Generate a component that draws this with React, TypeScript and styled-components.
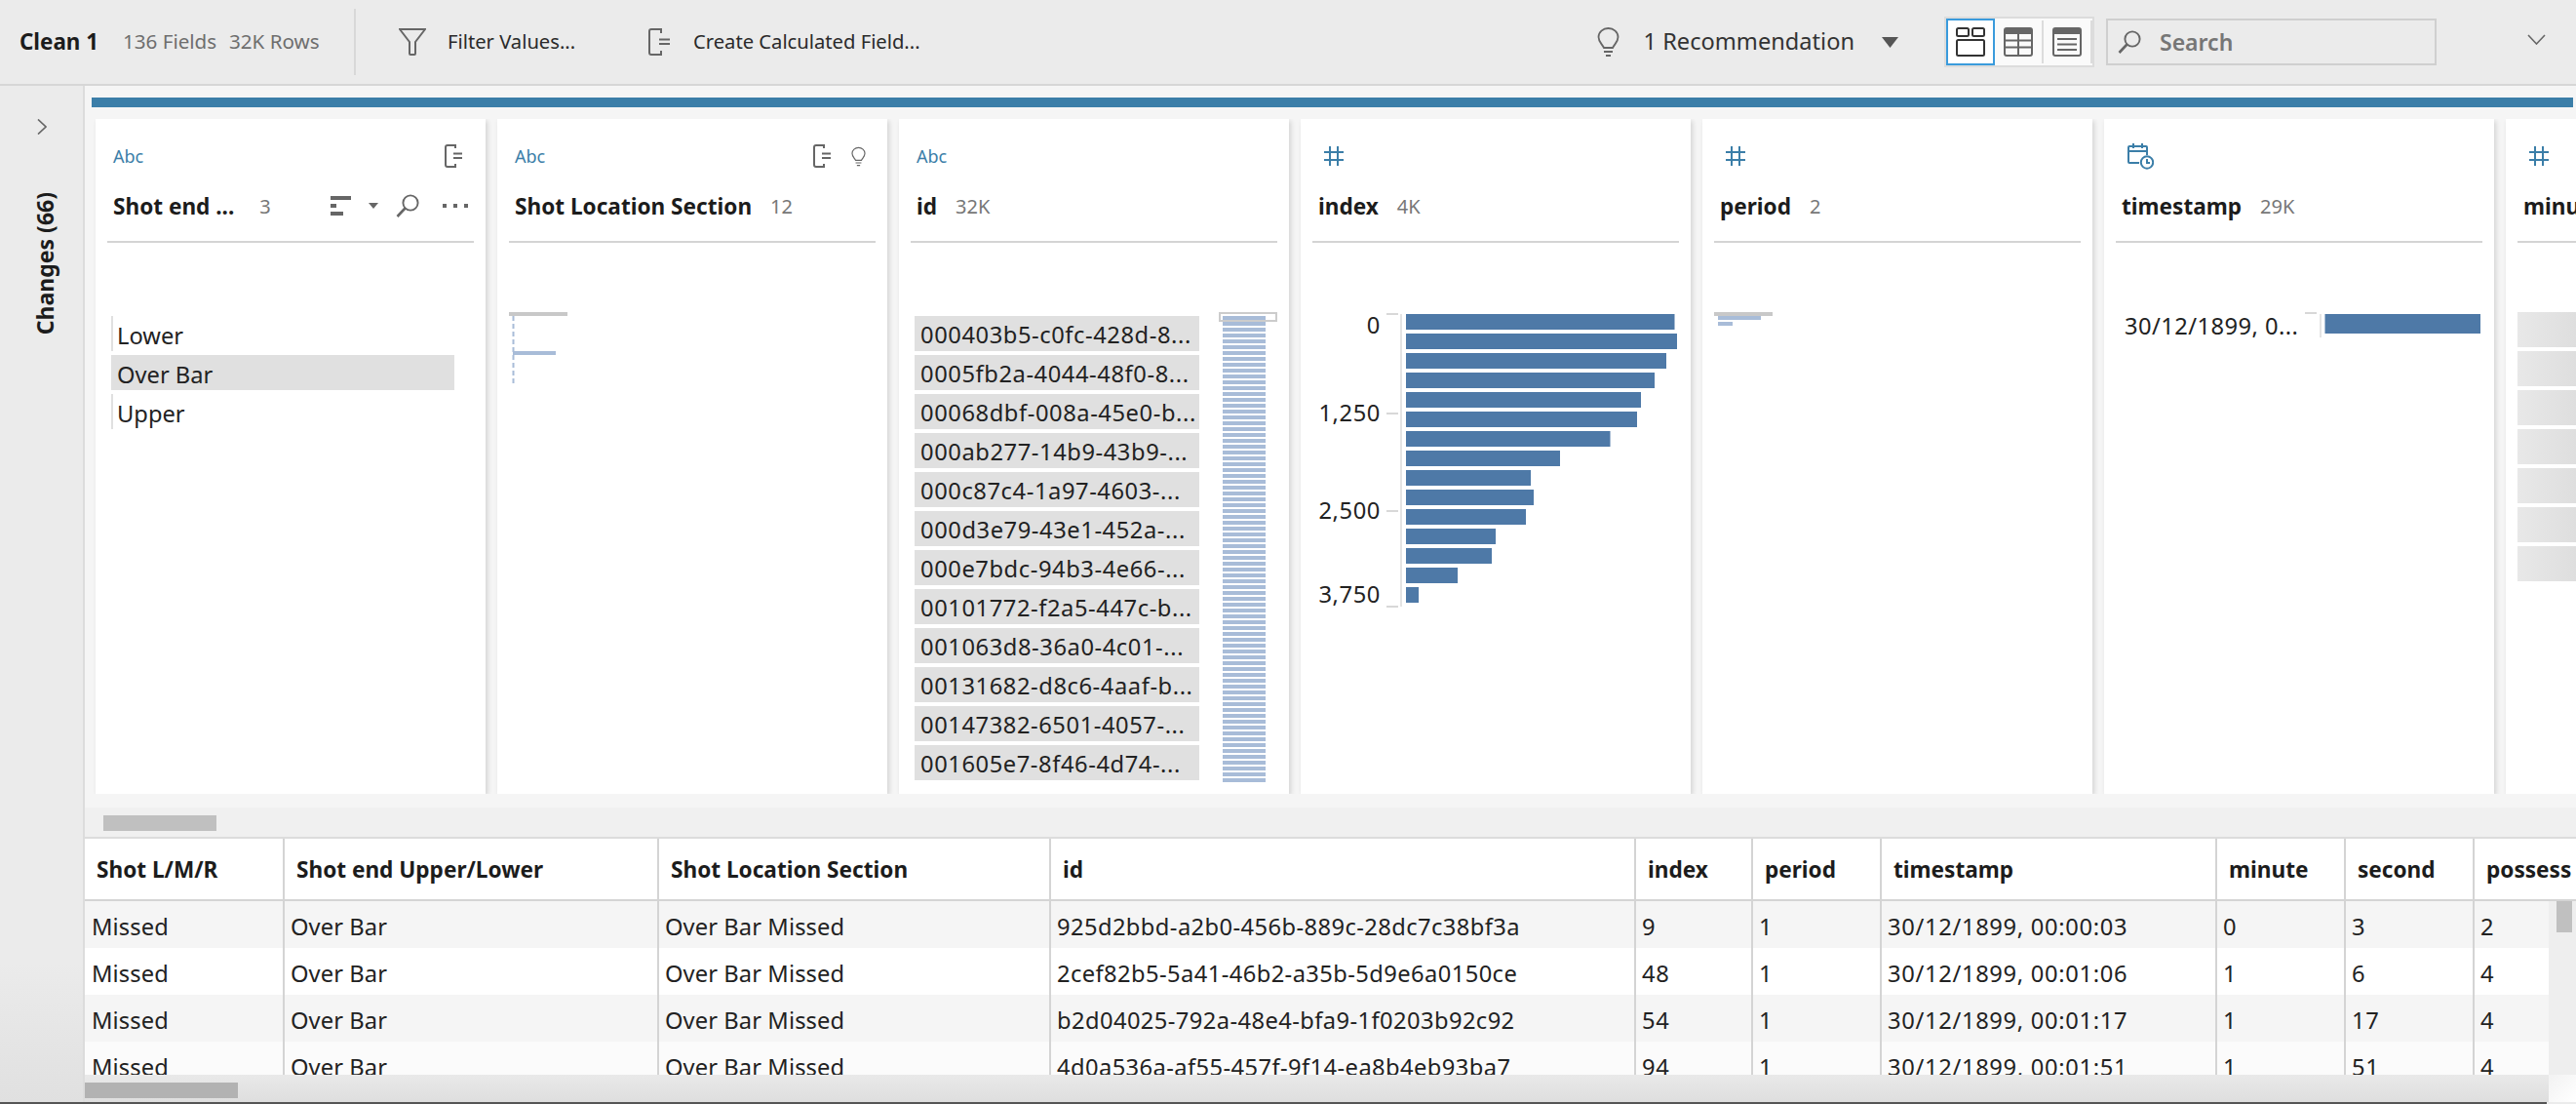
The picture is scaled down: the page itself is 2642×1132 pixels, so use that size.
import React from "react";
import styled, { createGlobalStyle } from "styled-components";

const Global = createGlobalStyle`
  html, body { margin: 0; padding: 0; background: #ebebeb; overflow: hidden; }
  * { box-sizing: border-box; }
  #root { width: 2642px; height: 1132px; }
`;

const FONT = `"Noto Sans", "Open Sans", sans-serif`;

const Page = styled.div`
  width: 2642px;
  height: 1132px;
  display: flex;
  flex-direction: column;
  overflow: hidden;
  font-family: ${FONT};
  color: #222;
`;

/* ---------- toolbar ---------- */
const Toolbar = styled.header`
  flex: 0 0 88px;
  display: flex;
  align-items: center;
  background: #ebebeb;
  border-bottom: 2px solid #d6d6d6;
  padding-right: 31px;
`;
const Title = styled.span`
  margin-left: 20px;
  padding-bottom: 2px;
  font-size: 22.4px;
  font-weight: 700;
  color: #1c1c1c;
  width: 106px;
  white-space: nowrap;
`;
const Meta = styled.span<{ $w: number }>`
  padding-bottom: 2px;
  font-size: 20.6px;
  color: #6e6e6e;
  width: ${(p) => p.$w}px;
  white-space: nowrap;
`;
const ToolSep = styled.div`
  width: 2px;
  height: 68px;
  background: #d8d8d8;
  margin: 0 44px 0 2px;
`;
const Action = styled.div<{ $w: number; $gap: number }>`
  width: ${(p) => p.$w}px;
  display: flex;
  align-items: center;
  gap: ${(p) => p.$gap}px;
  font-size: 20.2px;
  color: #2a2a2a;
  white-space: nowrap;
`;
const RaisedLabel = styled.span`
  padding-bottom: 2px;
`;
const Spacer = styled.div`
  flex: 1;
`;
const Reco = styled.div`
  display: flex;
  align-items: center;
  gap: 25px;
  font-size: 23.6px;
  color: #333;
  white-space: nowrap;
`;
const RecoCaret = styled.svg`
  margin: 0 47px 0 28px;
`;
const ViewToggle = styled.div`
  width: 154px;
  height: 52px;
  display: flex;
  padding: 0;
  border: 2px solid #dcdcdc;
  background: #fafafa;
  margin-right: 12px;
`;
const ViewButton = styled.div<{ $active?: boolean; $w: number }>`
  width: ${(p) => p.$w}px;
  height: 48px;
  display: flex;
  align-items: center;
  justify-content: center;
  background: ${(p) => (p.$active ? "#fff" : "transparent")};
  border: 2px solid ${(p) => (p.$active ? "#3a9bdc" : "transparent")};
`;
const ViewDivider = styled.div`
  width: 2px;
  height: 44px;
  margin-top: 2px;
  background: #dcdcdc;
`;
const SearchBox = styled.div`
  width: 339px;
  height: 48px;
  display: flex;
  align-items: center;
  gap: 19px;
  padding-left: 10px;
  border: 2px solid #cfcfcf;
  font-size: 23px;
  font-weight: 600;
  color: #767676;
`;
const ToolChevron = styled.svg`
  margin: 0 0 6px 93px;
`;

/* ---------- shell ---------- */
const Shell = styled.div`
  flex: 1;
  min-height: 0;
  display: flex;
`;
const Sidebar = styled.aside`
  flex: 0 0 87px;
  display: flex;
  flex-direction: column;
  align-items: center;
  background: linear-gradient(180deg, #ebebeb 0, #ebebeb 900px, #e0e0e0 100%);
  border-right: 2px solid #dcdcdc;
  padding-top: 34px;
`;
const SideLabel = styled.div`
  margin-top: 59px;
  margin-left: 6px;
  writing-mode: vertical-rl;
  transform: rotate(180deg);
  font-size: 23px;
  font-weight: 700;
  color: #1c1c1c;
  white-space: nowrap;
`;
const Main = styled.main`
  flex: 1;
  min-width: 0;
  display: flex;
  flex-direction: column;
  background: #f5f5f5;
`;
const Progress = styled.div`
  flex: 0 0 10px;
  margin: 12px 3px 0 7px;
  background: #3b7ea8;
`;
const CardRail = styled.div`
  flex: 0 0 692px;
  margin-top: 12px;
  padding-left: 11px;
  display: flex;
  gap: 12px;
  overflow: hidden;
`;
const Card = styled.section`
  flex: 0 0 400px;
  height: 692px;
  padding: 24px 12px 0;
  background: #fff;
  box-shadow: 2px 2px 5px rgba(0, 0, 0, 0.14);
`;
const RailTrack = styled.div`
  flex: 0 0 32px;
  margin-top: 14px;
  padding: 8px 0 0 19px;
  background: #f0f0f0;
  border-bottom: 2px solid #dcdcdc;
`;
const RailThumb = styled.div`
  width: 116px;
  height: 16px;
  background: #c0c0c0;
`;
const TypeRow = styled.div`
  height: 28px;
  padding: 0 10px 0 6px;
  display: flex;
  align-items: center;
  gap: 19px;
`;
const TypeLabel = styled.span`
  font-size: 18px;
  color: #3b7ea8;
  margin-right: auto;
`;
const TypeIcon = styled.svg`
  margin: 0 auto 0 6px;
`;
const NameRow = styled.div`
  height: 44px;
  margin-top: 15px;
  padding-left: 6px;
  display: flex;
  align-items: center;
  white-space: nowrap;
`;
const FieldName = styled.span`
  font-size: 22.6px;
  font-weight: 700;
  color: #1c1c1c;
`;
const Count = styled.span<{ $gap?: number }>`
  margin-left: ${(p) => p.$gap ?? 19}px;
  font-size: 20px;
  color: #777;
`;
const NameTools = styled.div`
  margin-left: auto;
  display: flex;
  align-items: center;
  padding-right: 6px;
`;
const ToolCaret = styled.svg`
  margin: 0 18px;
`;
const ToolDots = styled.svg`
  margin-left: 24px;
`;
const Divider = styled.div`
  height: 2px;
  margin-top: 14px;
  background: #d4d4d4;
`;
const CardBody = styled.div`
  padding-top: 71px;
`;
const BlockChart = styled.svg`
  display: block;
`;
const ValueList = styled.div`
  padding-top: 4px;
  display: flex;
  flex-direction: column;
  gap: 4px;
`;
const ValueRow = styled.div<{ $selected?: boolean }>`
  height: 36px;
  width: 352px;
  margin-left: 4px;
  display: flex;
  align-items: center;
  padding: 3px 0 0 4px;
  font-size: 23.7px;
  color: #222;
  border-left: 2px solid #e0e0e0;
  background: ${(p) => (p.$selected ? "#e0e0e0" : "transparent")};
`;
const IdLayout = styled.div`
  position: relative;
  padding: 4px 0 0 4px;
`;
const IdList = styled.div`
  width: 292px;
  display: flex;
  flex-direction: column;
  gap: 4px;
`;
const IdRow = styled.div`
  height: 36px;
  padding: 2px 0 0 6px;
  display: flex;
  align-items: center;
  background: #e0e0e0;
  font-size: 23.7px;
  letter-spacing: 0.58px;
  color: #222;
  white-space: nowrap;
`;
const IdMiniChart = styled.svg`
  position: absolute;
  left: 316px;
  top: 0;
`;
const TimeRow = styled.div`
  display: flex;
`;
const TimeLabel = styled.div`
  width: 194px;
  height: 28px;
  padding-left: 9px;
  display: flex;
  align-items: center;
  font-size: 23.7px;
  letter-spacing: 0.45px;
  color: #222;
  white-space: nowrap;
`;
const GhostList = styled.div`
  display: flex;
  flex-direction: column;
  gap: 4px;
`;
const GhostRow = styled.div`
  height: 36px;
  background: linear-gradient(90deg, #e8e8e8 0, #dedede 60px);
`;
const AxisText = styled.text`
  font-family: ${FONT};
  font-size: 23.7px;
  letter-spacing: 0.6px;
  fill: #222;
  text-anchor: end;
`;

/* ---------- table ---------- */
const COLS = "205px 384px 402px 600px 120px 132px 344px 132px 132px 200px";
const HeaderRow = styled.div`
  flex: 0 0 64px;
  display: grid;
  grid-template-columns: ${COLS};
  background: #fff;
  border-bottom: 2px solid #d4d4d4;
  overflow: hidden;
`;
const HeadCell = styled.div`
  display: flex;
  align-items: center;
  padding-left: 12px;
  border-right: 2px solid #d4d4d4;
  font-size: 22.6px;
  font-weight: 700;
  color: #1c1c1c;
  white-space: nowrap;
  &:last-child {
    border-right: 0;
  }
`;
const TableBody = styled.div`
  flex: 1;
  min-height: 0;
  display: flex;
  overflow: hidden;
`;
const Rows = styled.div`
  flex: 0 0 2527px;
  overflow: hidden;
`;
const DataRow = styled.div<{ $tone: string }>`
  height: 48px;
  display: grid;
  grid-template-columns: ${COLS};
  background: ${(p) => p.$tone};
`;
const DataCell = styled.div<{ $track?: number }>`
  display: flex;
  align-items: center;
  padding: 7px 0 3px 6px;
  border-right: 2px solid #d4d4d4;
  font-size: 23.7px;
  letter-spacing: ${(p) => p.$track ?? 0.1}px;
  color: #222;
  white-space: nowrap;
  &:first-child {
    padding-left: 7px;
  }
  &:last-child {
    border-right: 0;
  }
`;
const VTrack = styled.div`
  flex: 1;
  background: #eeeeee;
  padding-left: 8px;
`;
const VThumb = styled.div`
  width: 16px;
  height: 32px;
  background: #c0c0c0;
`;
const HBar = styled.div`
  flex: 0 0 28px;
  display: flex;
`;
const HTrack = styled.div`
  flex: 0 0 2527px;
  padding-top: 8px;
  background: linear-gradient(180deg, #e9e9e9, #dedede);
`;
const HThumb = styled.div`
  width: 157px;
  height: 16px;
  background: #b2b2b2;
`;
const HCorner = styled.div`
  flex: 1;
  background: linear-gradient(135deg, #f2f2f2, #ffffff);
`;
const WindowEdge = styled.div`
  flex: 0 0 2px;
  width: 2612px;
  background: #555;
`;

/* ---------- icons ---------- */
const G = "#666";
const CalcIcon = () => (
  <svg width="20" height="24" viewBox="0 0 20 24" fill="none" stroke={G} strokeWidth="2">
    <path d="M11 4V1H3a2 2 0 0 0-2 2v18a2 2 0 0 0 2 2h8v-3" />
    <path d="M9 9.5h9M9 14h9" />
  </svg>
);
const Bulb = ({ w = 23, h = 30 }: { w?: number; h?: number }) => (
  <svg width={w} height={h} viewBox="0 0 23 30" fill="none" stroke={G} strokeWidth="1.8">
    <path d="M7 21C5 17 1.5 15 1.5 10a10 9 0 0 1 20 0c0 5-3.5 7-5.5 11Z" />
    <path d="M7 25h9M9 29h5" />
  </svg>
);
const SearchGlyph = ({ s = 24 }: { s?: number }) => (
  <svg width={s} height={s} viewBox="0 0 24 24" fill="none" stroke={G} strokeWidth="1.9">
    <circle cx="15" cy="9" r="7.6" />
    <path d="M9.5 14.5 1.5 23" strokeWidth="2.6" />
  </svg>
);
const Hash = () => (
  <TypeIcon width="20" height="20" viewBox="0 0 20 20" stroke="#3b7ea8" strokeWidth="2" fill="none">
    <path d="M6 0v20M14 0v20M0 6h20M0 14h20" />
  </TypeIcon>
);
const DateIcon = () => (
  <TypeIcon width="27" height="27" viewBox="0 0 27 27" stroke="#3b7ea8" strokeWidth="2" fill="none">
    <path d="M12 20H2a1 1 0 0 1-1-1V4a1 1 0 0 1 1-1h17a1 1 0 0 1 1 1v8" />
    <path d="M1 8h19M6 0v5M15 0v5" />
    <circle cx="20" cy="19.5" r="6.2" />
    <path d="M20 16v4h3" />
  </TypeIcon>
);
const CardViewIcon = () => (
  <svg width="30" height="30" viewBox="0 0 30 30" fill="none" stroke="#333" strokeWidth="2">
    <rect x="1" y="1" width="12" height="8" rx="1.5" />
    <rect x="17" y="1" width="12" height="8" rx="1.5" />
    <rect x="1" y="13" width="28" height="16" rx="1.5" />
  </svg>
);
const TableViewIcon = () => (
  <svg width="30" height="30" viewBox="0 0 30 30">
    <rect x="1" y="1" width="28" height="28" rx="2" fill="none" stroke="#666" strokeWidth="2" />
    <rect x="1" y="1" width="28" height="6" fill="#666" />
    <path d="M1 13.5h28M1 20.5h28M15 6v23" stroke="#666" strokeWidth="2" />
  </svg>
);
const ListViewIcon = () => (
  <svg width="30" height="30" viewBox="0 0 30 30">
    <rect x="1" y="1" width="28" height="28" rx="2" fill="none" stroke="#666" strokeWidth="2" />
    <rect x="1" y="1" width="28" height="6" fill="#666" />
    <path d="M5 12h20M5 17.5h20M5 23h20" stroke="#666" strokeWidth="2" />
  </svg>
);

/* ---------- data ---------- */
const ids = [
  "000403b5-c0fc-428d-8...",
  "0005fb2a-4044-48f0-8...",
  "00068dbf-008a-45e0-b...",
  "000ab277-14b9-43b9-...",
  "000c87c4-1a97-4603-...",
  "000d3e79-43e1-452a-...",
  "000e7bdc-94b3-4e66-...",
  "00101772-f2a5-447c-b...",
  "001063d8-36a0-4c01-...",
  "00131682-d8c6-4aaf-b...",
  "00147382-6501-4057-...",
  "001605e7-8f46-4d74-...",
];
const histogram = [275.5, 278, 267, 255, 241, 237, 209.5, 158, 128, 131, 123, 92, 88, 53, 13];
const axis: [string, number, number][] = [
  ["0", 22, 1],
  ["1,250", 112, 103],
  ["2,500", 212, 203],
  ["3,750", 298, 301],
];
const columns = [
  "Shot L/M/R",
  "Shot end Upper/Lower",
  "Shot Location Section",
  "id",
  "index",
  "period",
  "timestamp",
  "minute",
  "second",
  "possess",
];
const rows = [
  ["925d2bbd-a2b0-456b-889c-28dc7c38bf3a", "9", "00:00:03", "0", "3", "2", "#f5f5f5"],
  ["2cef82b5-5a41-46b2-a35b-5d9e6a0150ce", "48", "00:01:06", "1", "6", "4", "#ffffff"],
  ["b2d04025-792a-48e4-bfa9-1f0203b92c92", "54", "00:01:17", "1", "17", "4", "#f5f5f5"],
  ["4d0a536a-af55-457f-9f14-ea8b4eb93ba7", "94", "00:01:51", "1", "51", "4", "#fbfbfb"],
];

export default function App() {
  return (
    <Page>
      <Global />
      <Toolbar>
        <Title>Clean 1</Title>
        <Meta $w={109}>136 Fields</Meta>
        <Meta $w={126}>32K Rows</Meta>
        <ToolSep />
        <Action $w={256} $gap={22}>
          <svg width="28" height="28" viewBox="0 0 28 28" fill="none" stroke={G} strokeWidth="2">
            <path d="M1 1h26L17 14v12a1 1 0 0 1-1 1h-4a1 1 0 0 1-1-1V14Z" />
          </svg>
          <RaisedLabel>Filter Values...</RaisedLabel>
        </Action>
        <Action $w={280} $gap={23}>
          <svg width="23" height="28" viewBox="0 0 23 28" fill="none" stroke={G} strokeWidth="2">
            <path d="M13 5V1H3a2 2 0 0 0-2 2v22a2 2 0 0 0 2 2h10v-4" />
            <path d="M11 11.5h11M11 16h11" />
          </svg>
          <RaisedLabel>Create Calculated Field...</RaisedLabel>
        </Action>
        <Spacer />
        <Reco>
          <Bulb />
          <RaisedLabel>1 Recommendation</RaisedLabel>
        </Reco>
        <RecoCaret width="17" height="11" viewBox="0 0 17 11">
          <path d="M0 0h17L8.5 11Z" fill="#555" />
        </RecoCaret>
        <ViewToggle>
          <ViewButton $active $w={50}>
            <CardViewIcon />
          </ViewButton>
          <ViewButton $w={48}>
            <TableViewIcon />
          </ViewButton>
          <ViewDivider />
          <ViewButton $w={48}>
            <ListViewIcon />
          </ViewButton>
          <ViewDivider />
        </ViewToggle>
        <SearchBox>
          <SearchGlyph />
          Search
        </SearchBox>
        <ToolChevron width="19" height="11" viewBox="0 0 19 11" fill="none" stroke={G} strokeWidth="1.6">
          <path d="M1 1l8.5 9L18 1" />
        </ToolChevron>
      </Toolbar>

      <Shell>
        <Sidebar>
          <svg width="10" height="16" viewBox="0 0 10 16" fill="none" stroke={G} strokeWidth="1.7">
            <path d="M1 0.5 9 8l-8 7.5" />
          </svg>
          <SideLabel>Changes (66)</SideLabel>
        </Sidebar>

        <Main>
          <Progress />
          <CardRail>
            <Card>
              <TypeRow>
                <TypeLabel>Abc</TypeLabel>
                <CalcIcon />
              </TypeRow>
              <NameRow>
                <FieldName>Shot end ...</FieldName>
                <Count $gap={26}>3</Count>
                <NameTools>
                  <svg width="21" height="20" viewBox="0 0 21 20" fill="#666">
                    <rect width="21" height="4" />
                    <rect y="8" width="6" height="4" />
                    <rect y="16" width="13" height="4" />
                  </svg>
                  <ToolCaret width="10" height="6" viewBox="0 0 10 6" fill="#666">
                    <path d="M0 0h10L5 6Z" />
                  </ToolCaret>
                  <SearchGlyph />
                  <ToolDots width="26" height="6" viewBox="0 0 26 6" fill="#666">
                    <rect y="1" width="4" height="4" />
                    <rect x="11" y="1" width="4" height="4" />
                    <rect x="22" y="1" width="4" height="4" />
                  </ToolDots>
                </NameTools>
              </NameRow>
              <Divider />
              <CardBody>
                <ValueList>
                  <ValueRow>Lower</ValueRow>
                  <ValueRow $selected>Over Bar</ValueRow>
                  <ValueRow>Upper</ValueRow>
                </ValueList>
              </CardBody>
            </Card>

            <Card>
              <TypeRow>
                <TypeLabel>Abc</TypeLabel>
                <CalcIcon />
                <Bulb w={15} h={23} />
              </TypeRow>
              <NameRow>
                <FieldName>Shot Location Section</FieldName>
                <Count>12</Count>
              </NameRow>
              <Divider />
              <CardBody>
                <BlockChart width="60" height="76" viewBox="0 0 60 76">
                  <rect width="60" height="4" fill="#c8c8c8" />
                  <path d="M4.5 4v70" stroke="#a8bcd8" strokeWidth="2" strokeDasharray="5 3" />
                  <rect x="4" y="40" width="44" height="4" fill="#a8bcd8" />
                </BlockChart>
              </CardBody>
            </Card>

            <Card>
              <TypeRow>
                <TypeLabel>Abc</TypeLabel>
              </TypeRow>
              <NameRow>
                <FieldName>id</FieldName>
                <Count>32K</Count>
              </NameRow>
              <Divider />
              <CardBody>
                <IdLayout>
                  <IdList>
                    {ids.map((id) => (
                      <IdRow key={id}>{id}</IdRow>
                    ))}
                  </IdList>
                  <IdMiniChart width="60" height="484" viewBox="0 0 60 484">
                    <rect x="4" y="4" width="44" height="10" fill="#a8bcd8" />
                    {Array.from({ length: 78 }, (_, i) => (
                      <rect key={i} x="4" y={16 + i * 6} width="44" height="4" fill="#a8bcd8" />
                    ))}
                    <rect x="1" y="1" width="58" height="8" fill="none" stroke="#ccc" strokeWidth="2" />
                  </IdMiniChart>
                </IdLayout>
              </CardBody>
            </Card>

            <Card>
              <TypeRow>
                <Hash />
              </TypeRow>
              <NameRow>
                <FieldName>index</FieldName>
                <Count>4K</Count>
              </NameRow>
              <Divider />
              <CardBody>
                <BlockChart width="376" height="310" viewBox="0 0 376 310">
                  {axis.map(([label, y, tick]) => (
                    <React.Fragment key={label}>
                      <AxisText x="70" y={y}>
                        {label}
                      </AxisText>
                      <rect x="76" y={tick} width="12" height="2" fill="#d8d8d8" />
                    </React.Fragment>
                  ))}
                  <rect x="90" y="2" width="2" height="300" fill="#e4e4e4" />
                  {histogram.map((w, i) => (
                    <rect key={i} x="96" y={2 + i * 20} width={w} height="16" fill="#4e79a7" />
                  ))}
                </BlockChart>
              </CardBody>
            </Card>

            <Card>
              <TypeRow>
                <Hash />
              </TypeRow>
              <NameRow>
                <FieldName>period</FieldName>
                <Count>2</Count>
              </NameRow>
              <Divider />
              <CardBody>
                <BlockChart width="60" height="14" viewBox="0 0 60 14">
                  <rect width="60" height="4" fill="#c8c8c8" />
                  <rect x="4" y="4" width="44" height="4" fill="#a8bcd8" />
                  <rect x="4" y="10" width="15" height="4" fill="#a8bcd8" />
                </BlockChart>
              </CardBody>
            </Card>

            <Card>
              <TypeRow>
                <DateIcon />
              </TypeRow>
              <NameRow>
                <FieldName>timestamp</FieldName>
                <Count>29K</Count>
              </NameRow>
              <Divider />
              <CardBody>
                <TimeRow>
                  <TimeLabel>30/12/1899, 0...</TimeLabel>
                  <svg width="180" height="28" viewBox="0 0 180 28">
                    <rect width="12" height="2" fill="#d8d8d8" />
                    <rect x="15" y="2" width="2" height="24" fill="#e4e4e4" />
                    <rect x="20.5" y="2" width="160" height="20" fill="#4e79a7" />
                  </svg>
                </TimeRow>
              </CardBody>
            </Card>

            <Card>
              <TypeRow>
                <Hash />
              </TypeRow>
              <NameRow>
                <FieldName>minute</FieldName>
              </NameRow>
              <Divider />
              <CardBody>
                <GhostList>
                  {Array.from({ length: 7 }, (_, i) => (
                    <GhostRow key={i} />
                  ))}
                </GhostList>
              </CardBody>
            </Card>
          </CardRail>

          <RailTrack>
            <RailThumb />
          </RailTrack>

          <HeaderRow>
            {columns.map((c) => (
              <HeadCell key={c}>{c}</HeadCell>
            ))}
          </HeaderRow>
          <TableBody>
            <Rows>
              {rows.map((r) => (
                <DataRow key={r[0]} $tone={r[6]}>
                  <DataCell>Missed</DataCell>
                  <DataCell>Over Bar</DataCell>
                  <DataCell>Over Bar Missed</DataCell>
                  <DataCell $track={0.42}>{r[0]}</DataCell>
                  <DataCell $track={0.7}>{r[1]}</DataCell>
                  <DataCell>1</DataCell>
                  <DataCell $track={0.68}>30/12/1899, {r[2]}</DataCell>
                  <DataCell>{r[3]}</DataCell>
                  <DataCell $track={0.7}>{r[4]}</DataCell>
                  <DataCell>{r[5]}</DataCell>
                </DataRow>
              ))}
            </Rows>
            <VTrack>
              <VThumb />
            </VTrack>
          </TableBody>
          <HBar>
            <HTrack>
              <HThumb />
            </HTrack>
            <HCorner />
          </HBar>
        </Main>
      </Shell>
      <WindowEdge />
    </Page>
  );
}
